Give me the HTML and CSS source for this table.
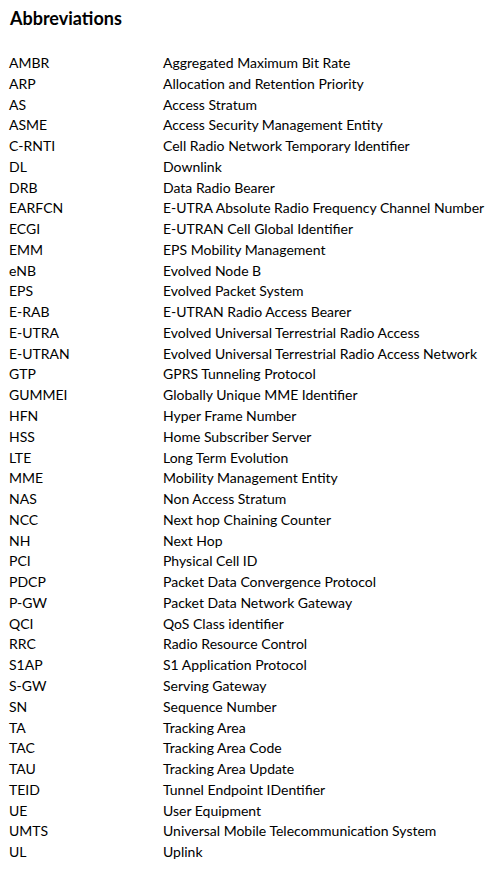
FILE: index.html
```html
<!DOCTYPE html>
<html>
<head>
<meta charset="utf-8">
<link rel="stylesheet" href="styles.css">
</head>
<body>
<div class="page">
  <h1 class="title">Abbreviations</h1>
  <div class="list">
    <div class="abbr">AMBR</div><div class="def">Aggregated Maximum Bit Rate</div>
    <div class="abbr">ARP</div><div class="def">Allocation and Retention Priority</div>
    <div class="abbr">AS</div><div class="def">Access Stratum</div>
    <div class="abbr">ASME</div><div class="def">Access Security Management Entity</div>
    <div class="abbr">C-RNTI</div><div class="def">Cell Radio Network Temporary Identifier</div>
    <div class="abbr">DL</div><div class="def">Downlink</div>
    <div class="abbr">DRB</div><div class="def">Data Radio Bearer</div>
    <div class="abbr">EARFCN</div><div class="def">E-UTRA Absolute Radio Frequency Channel Number</div>
    <div class="abbr">ECGI</div><div class="def">E-UTRAN Cell Global Identifier</div>
    <div class="abbr">EMM</div><div class="def">EPS Mobility Management</div>
    <div class="abbr">eNB</div><div class="def">Evolved Node B</div>
    <div class="abbr">EPS</div><div class="def">Evolved Packet System</div>
    <div class="abbr">E-RAB</div><div class="def">E-UTRAN Radio Access Bearer</div>
    <div class="abbr">E-UTRA</div><div class="def">Evolved Universal Terrestrial Radio Access</div>
    <div class="abbr">E-UTRAN</div><div class="def">Evolved Universal Terrestrial Radio Access Network</div>
    <div class="abbr">GTP</div><div class="def">GPRS Tunneling Protocol</div>
    <div class="abbr">GUMMEI</div><div class="def">Globally Unique MME Identifier</div>
    <div class="abbr">HFN</div><div class="def">Hyper Frame Number</div>
    <div class="abbr">HSS</div><div class="def">Home Subscriber Server</div>
    <div class="abbr">LTE</div><div class="def">Long Term Evolution</div>
    <div class="abbr">MME</div><div class="def">Mobility Management Entity</div>
    <div class="abbr">NAS</div><div class="def">Non Access Stratum</div>
    <div class="abbr">NCC</div><div class="def">Next hop Chaining Counter</div>
    <div class="abbr">NH</div><div class="def">Next Hop</div>
    <div class="abbr">PCI</div><div class="def">Physical Cell ID</div>
    <div class="abbr">PDCP</div><div class="def">Packet Data Convergence Protocol</div>
    <div class="abbr">P-GW</div><div class="def">Packet Data Network Gateway</div>
    <div class="abbr">QCI</div><div class="def">QoS Class identifier</div>
    <div class="abbr">RRC</div><div class="def">Radio Resource Control</div>
    <div class="abbr">S1AP</div><div class="def">S1 Application Protocol</div>
    <div class="abbr">S-GW</div><div class="def">Serving Gateway</div>
    <div class="abbr">SN</div><div class="def">Sequence Number</div>
    <div class="abbr">TA</div><div class="def">Tracking Area</div>
    <div class="abbr">TAC</div><div class="def">Tracking Area Code</div>
    <div class="abbr">TAU</div><div class="def">Tracking Area Update</div>
    <div class="abbr">TEID</div><div class="def">Tunnel Endpoint IDentifier</div>
    <div class="abbr">UE</div><div class="def">User Equipment</div>
    <div class="abbr">UMTS</div><div class="def">Universal Mobile Telecommunication System</div>
    <div class="abbr">UL</div><div class="def">Uplink</div>
  </div>
</div>
</body>
</html>
```
FILE: styles.css
```css
html, body {
  margin: 0;
  padding: 0;
  background: #ffffff;
}
.page {
  padding: 6px 0 0 9px;
  font-family: Lato, "Open Sans", sans-serif;
  color: #000000;
}
.title {
  margin: 0;
  padding-left: 1px;
  font-size: 18px;
  line-height: 24px;
  font-weight: 700;
}
.list {
  margin-top: 23px;
  display: grid;
  grid-template-columns: 154px 1fr;
  font-size: 14px;
  line-height: 20.76px;
}
.abbr, .def {
  white-space: nowrap;
}
```
